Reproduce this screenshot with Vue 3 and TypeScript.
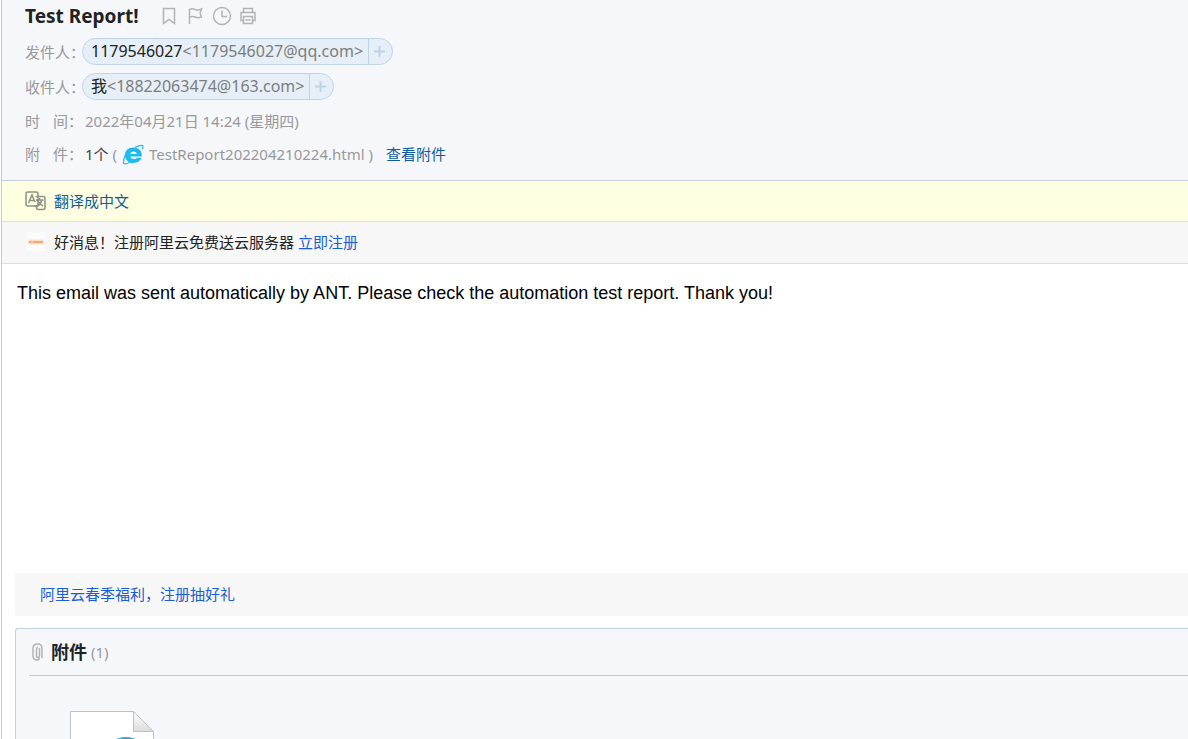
<script setup lang="ts">
interface Contact {
  label: string
  name: string
  address: string
}

const contacts: Contact[] = [
  { label: '发件人：', name: '1179546027', address: '<1179546027@qq.com>' },
  { label: '收件人：', name: '我', address: '<18822063474@163.com>' },
]
const attachment = 'TestReport202204210224.html'
</script>

<template>
  <main class="mail">
    <header class="head">
      <div class="title-row">
        <h1>Test Report!</h1>
        <div class="tools">
          <button type="button" aria-label="书签">
            <svg width="18" height="18" viewBox="0 0 18 18"><path d="M3.500 1.500h11v15l-5.500-4-5.500 4z" /></svg>
          </button>
          <button type="button" aria-label="标记">
            <svg width="18" height="18" viewBox="0 0 18 18"><path d="M3.500 17V2.500c2-1 3.500-1 5.500 0s3.500 1 6.500-.5l-1.500 4 1.500 4c-3 1.200-4.500.8-6.500 0s-3.500-.8-5.500.2" /></svg>
          </button>
          <button type="button" aria-label="稍后处理">
            <svg width="20" height="20" viewBox="0 0 20 20"><circle cx="10" cy="10" r="8.500" /><path d="M10 4.500v6h5" /></svg>
          </button>
          <button type="button" aria-label="打印">
            <svg width="18" height="18" viewBox="0 0 18 18"><path d="M3.500 5.500V1.500h9v4M3.500 13.500h-2.500v-8h14v8h-2.500M3.500 9.500h9v7h-9zM5.500 13h5" /></svg>
          </button>
        </div>
      </div>
      <div v-for="c in contacts" :key="c.label" class="row contact">
        <span class="label">{{ c.label }}</span>
        <span class="chip">
          <span class="who"><b>{{ c.name }}</b>{{ c.address }}</span>
          <button type="button" class="add" aria-label="添加联系人">
            <svg width="11" height="11" viewBox="0 0 11 11"><path d="M5.500 0v11M0 5.500h11" /></svg>
          </button>
        </span>
      </div>
      <div class="row">
        <span class="label"><span class="spread"><i>时</i><i>间</i></span>：</span>
        <span class="value">2022年04月21日 14:24 (星期四)</span>
      </div>
      <div class="row">
        <span class="label"><span class="spread"><i>附</i><i>件</i></span>：</span>
        <span class="value files">
          <span><span class="count">1个</span> (</span>
          <svg class="ie" width="22" height="22" viewBox="0 0 22 22">
            <path class="e" fill-rule="evenodd" d="M11.500 4.500c5.600 0 8.700 3.500 8.400 9.100H8.400c.2 1.600 1.500 2.400 3.500 2.400 1.500 0 2.500-.4 3.100-1.200h4.500c-1.200 3.400-4.200 5.200-8 5.200-5.200 0-8.500-3.200-8.500-7.800s3.300-7.700 8.500-7.700zM8.400 11h6.400c-.2-1.700-1.300-2.600-3.200-2.600S8.700 9.300 8.400 11z" />
            <path class="orbit" d="M13 4.500c3-1.700 6.500-2.300 7.700-2 .5.700.2 2.300-.4 3.800M8 6C4.500 9 1.500 14 1.300 20.300c1.500 1.200 4.200.4 6.700-1.300" />
          </svg>
          <span>{{ attachment }} )</span>
          <a href="#attachments" class="view">查看附件</a>
        </span>
      </div>
    </header>

    <div class="bar translate">
      <svg width="21" height="20" viewBox="0 0 21 20">
        <rect x="1" y="1" width="12" height="14" rx="2" />
        <path d="M3.500 12 7 4l3 7M4.500 9.500h5" />
        <path class="front" d="M10.500 5.500H18q2 0 2 2v9q0 2-2 2h-4.500q-2 0-2-2V15H9" />
        <path d="M11 9h7.500M14.500 7v2M17 9q-1 4-5 6.500M12.500 9q1.500 4 5.500 6" />
      </svg>
      <a href="#translate">翻译成中文</a>
    </div>
    <div class="bar notice">
      <svg width="18" height="18" viewBox="0 0 18 18">
        <rect class="tile" width="18" height="18" />
        <path class="glow" d="M1 9h16" />
        <path class="mark" d="M2 9h2.500M5.500 9h10.500" />
      </svg>
      <span>好消息！注册阿里云免费送云服务器 <a href="#register">立即注册</a></span>
    </div>

    <article class="body">
      <p>This email was sent automatically by ANT. Please check the automation test report. Thank you!</p>
    </article>

    <div class="promo"><a href="#gift">阿里云春季福利，注册抽好礼</a></div>

    <section id="attachments" class="attachments">
      <div class="attach-head">
        <svg width="11" height="18" viewBox="0 0 11 18"><path d="M7.500 5v8q0 1.500-1.500 1.500T4.500 13V6q0-1.500 1.500-1.500M10 15V5.500Q10 1 5.500 1T1 5.500v7Q1 17 5.500 17 7 17 7.500 15" /></svg>
        <h2>附件</h2>
        <span>(1)</span>
      </div>
      <a class="file" href="#file" :aria-label="attachment">
        <svg width="86" height="106" viewBox="0 0 86 106">
          <defs>
            <linearGradient id="fold" x1="0" y1="0" x2="0" y2="1">
              <stop offset="0" stop-color="#fff" />
              <stop offset="1" stop-color="#dcdcdc" />
            </linearGradient>
          </defs>
          <path class="sheet" d="M1.500 1.500h63l20 20v83h-83z" />
          <path class="fold" d="M64.500 1.500v20h20z" />
          <ellipse class="disc" cx="57" cy="44" rx="20" ry="17" />
        </svg>
      </a>
    </section>
  </main>
</template>

<style>
body {
  margin: 0;
  overflow: hidden;
}
</style>

<style scoped>
.mail {
  box-sizing: border-box;
  height: 100vh;
  overflow: hidden;
  margin-left: 1px;
  border-left: 1px solid #c1cddb;
  background: #fff;
  color: #222;
  font: 15px/20px "Noto Sans", "Noto Sans CJK SC", sans-serif;
}
a {
  color: #1b5cd7;
  text-decoration: none;
}
button {
  padding: 0;
  border: 0;
  background: none;
}
svg {
  display: block;
  flex: none;
  fill: none;
}
.head {
  padding: 0 23px 10px;
  border-bottom: 1px solid #c1cddb;
  background: #f5f7fb;
}
.title-row {
  display: flex;
  align-items: center;
  gap: 21px;
  height: 31px;
  padding-bottom: 3px;
}
h1 {
  margin: 0;
  font-size: 19px;
  line-height: 24px;
}
.tools {
  display: flex;
  align-items: center;
  gap: 8px;
}
.tools svg {
  stroke: #b4b4b4;
  stroke-width: 1.500;
}
.row {
  display: flex;
  align-items: center;
  height: 33px;
  color: #999;
}
.row.contact {
  height: 35px;
}
.label {
  flex: none;
  width: 60px;
  white-space: nowrap;
}
.contact .label {
  width: 57px;
}
.spread {
  display: inline-flex;
  justify-content: space-between;
  width: 43px;
}
.spread i {
  font-style: normal;
}
.chip {
  display: flex;
  box-sizing: border-box;
  height: 27px;
  border: 1px solid #bfd3e6;
  border-radius: 14px;
  background: #e6eff7;
}
.who {
  padding: 0 5px 0 8px;
  color: #7d7d7d;
  font-size: 16px;
  line-height: 25px;
}
.who b {
  color: #222;
  font-weight: 400;
}
.add {
  display: flex;
  align-items: center;
  justify-content: center;
  width: 24px;
  padding-right: 3px;
  border-left: 1px solid #bfd3e6;
}
.add svg {
  stroke: #bfd3e6;
  stroke-width: 2;
}
.files {
  display: flex;
  align-items: center;
  gap: 5px;
}
.count {
  color: #444;
}
.ie .e {
  fill: #1ebbee;
}
.ie .orbit {
  stroke: #1ebbee;
  stroke-width: 1.200;
}
.view {
  margin-left: 8px;
  color: #0f5b9d;
}
.bar {
  display: flex;
  align-items: center;
  gap: 8px;
  height: 40px;
  padding: 0 23px;
  border-bottom: 1px solid #dedede;
}
.translate {
  background: #ffffe1;
}
.translate svg {
  stroke: #8f9185;
  stroke-width: 1.500;
}
.translate a {
  color: #0f5b9d;
}
.notice {
  gap: 9px;
  height: 40px;
  padding: 0 25px 1px;
  background: #f7f7f7;
}
.tile {
  fill: #fefcfa;
}
.glow {
  stroke: #fde0c8;
  stroke-width: 5;
}
.mark {
  stroke: #f2a878;
  stroke-width: 2;
}
.body {
  box-sizing: border-box;
  min-height: 309px;
  padding: 18px 15px;
  color: #000;
  font: 18px/22px "Liberation Sans", Arial, sans-serif;
}
.body p {
  margin: 0;
}
.promo {
  margin-left: 13px;
  padding: 11px 25px 12px;
  border-radius: 3px 0 0 3px;
  background: #f7f7f7;
}
.attachments {
  margin: 12px 0 0 13px;
  padding-left: 13px;
  border: 1px solid #c1d3e3;
  border-right: 0;
  border-radius: 3px 0 0 0;
  background: #f5f7fb;
}
.attach-head {
  display: flex;
  align-items: center;
  gap: 4px;
  height: 46px;
  padding-left: 3px;
  border-bottom: 1px solid #c1cddb;
  color: #999;
}
.attach-head svg {
  margin-right: 4px;
  stroke: #b4b4b4;
  stroke-width: 1.500;
}
h2 {
  margin: 0;
  color: #222;
  font-size: 18px;
  line-height: 24px;
}
.file {
  display: block;
  width: 86px;
  padding: 34px 0 30px 40px;
}
.sheet {
  fill: #fff;
  stroke: #c0c0c0;
}
.fold {
  fill: url(#fold);
  stroke: #c0c0c0;
}
.disc {
  fill: #3ba5d8;
}
</style>
